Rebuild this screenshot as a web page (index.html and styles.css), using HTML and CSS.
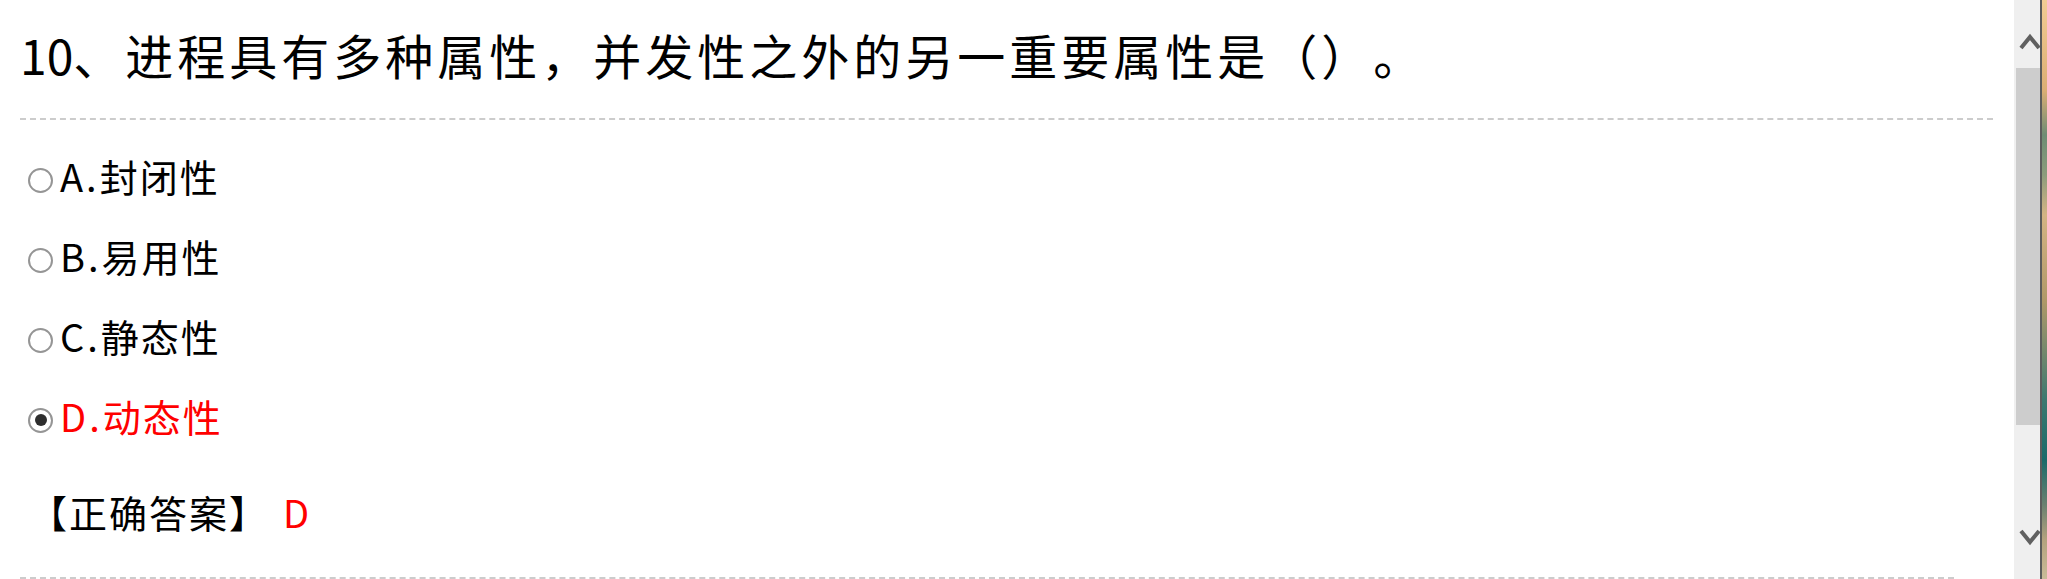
FILE: index.html
```html
<!DOCTYPE html>
<html lang="zh-CN">
<head>
<meta charset="utf-8">
<title>进程属性</title>
<link rel="stylesheet" href="styles.css">
</head>
<body>
<div class="window">
  <main class="page">
    <h2 class="q-title"><span class="num">10</span>、进程具有多种属性，并发性之外的另一重要属性是（）。</h2>
    <ul class="options">
      <li class="option"><span class="radio"></span><span class="label"><span class="prefix">A.</span>封闭性</span></li>
      <li class="option"><span class="radio"></span><span class="label"><span class="prefix">B.</span>易用性</span></li>
      <li class="option"><span class="radio"></span><span class="label"><span class="prefix">C.</span>静态性</span></li>
      <li class="option selected"><span class="radio checked"></span><span class="label"><span class="prefix">D.</span>动态性</span></li>
    </ul>
    <div class="answer-block">
      <div class="answer"><span class="answer-label">【正确答案】</span><span class="answer-key">D</span></div>
    </div>
  </main>
  <div class="scrollbar">
    <div class="sb-btn sb-up">
      <svg width="26" height="68" viewBox="0 0 26 68"><polyline points="7,48 16,37 25,48" fill="none" stroke="#606060" stroke-width="4"/></svg>
    </div>
    <div class="sb-thumb"></div>
    <div class="sb-track"></div>
    <div class="sb-btn sb-down">
      <svg width="26" height="68" viewBox="0 0 26 68"><polyline points="7,20 16,31 25,20" fill="none" stroke="#606060" stroke-width="4"/></svg>
    </div>
  </div>
  <div class="edge"></div>
  <div class="wallpaper"></div>
</div>
</body>
</html>
```

FILE: styles.css
```css
html, body {
  margin: 0;
  padding: 0;
  background: #ffffff;
  overflow: hidden;
}

.window {
  display: flex;
  width: 2047px;
  height: 579px;
  overflow: hidden;
  font-family: "Noto Sans CJK SC", "Noto Sans", sans-serif;
  color: #000;
  text-spacing-trim: space-all;
  font-kerning: none;
}

.page {
  flex: 1;
  min-width: 0;
  padding: 0 21px 0 20px;
  background: #fff;
}

.q-title {
  margin: 0;
  padding: 24px 0 34px;
  font-size: 48px;
  font-weight: normal;
  line-height: 60px;
  letter-spacing: 4px;
  white-space: nowrap;
  border-bottom: 2px dashed #cccccc;
}

.q-title .num {
  letter-spacing: 0;
}

.options {
  list-style: none;
  margin: 15px 0 0;
  padding: 0 0 0 8px;
}

.option {
  display: flex;
  align-items: center;
  gap: 7px;
  height: 80px;
  font-size: 38px;
  letter-spacing: 2px;
}

.option .prefix {
  letter-spacing: 3px;
}

.option.selected .label {
  color: #ff0000;
}

.radio {
  width: 25px;
  height: 25px;
  margin-top: 10px;
  box-sizing: border-box;
  border: 2px solid #959595;
  border-radius: 50%;
  background: #fff;
  display: flex;
  align-items: center;
  justify-content: center;
  flex: none;
}

.radio.checked::after {
  content: "";
  width: 12px;
  height: 12px;
  border-radius: 50%;
  background: #2e2e2e;
}

.answer-block {
  margin-right: 39px;
  padding: 16px 0 26px;
  border-bottom: 2px dashed #cccccc;
}

.answer {
  display: flex;
  align-items: center;
  height: 80px;
  font-size: 38px;
  letter-spacing: 2px;
  padding-left: 9px;
}

.answer-key {
  color: #ff0000;
  margin-left: 14px;
  letter-spacing: 0;
}

.scrollbar {
  width: 26px;
  flex: none;
  display: flex;
  flex-direction: column;
  background: #efefef;
}

.sb-btn {
  height: 68px;
  flex: none;
}

.sb-btn svg {
  display: block;
}

.sb-thumb {
  height: 357px;
  margin-left: 2px;
  background: #cdcdcd;
  flex: none;
}

.sb-track {
  flex: 1;
}

.edge {
  width: 2px;
  flex: none;
  background: #5c5c5c;
}

.wallpaper {
  width: 5px;
  flex: none;
  background: linear-gradient(to bottom,
    #f2cc94 0px,
    #dcae74 90px,
    #6e8c74 135px,
    #8c9c7c 175px,
    #d4b484 215px,
    #b09868 300px,
    #3c7870 400px,
    #1a6a6a 460px,
    #6a8070 505px,
    #b4a27e 540px,
    #cabb98 579px);
}
```
